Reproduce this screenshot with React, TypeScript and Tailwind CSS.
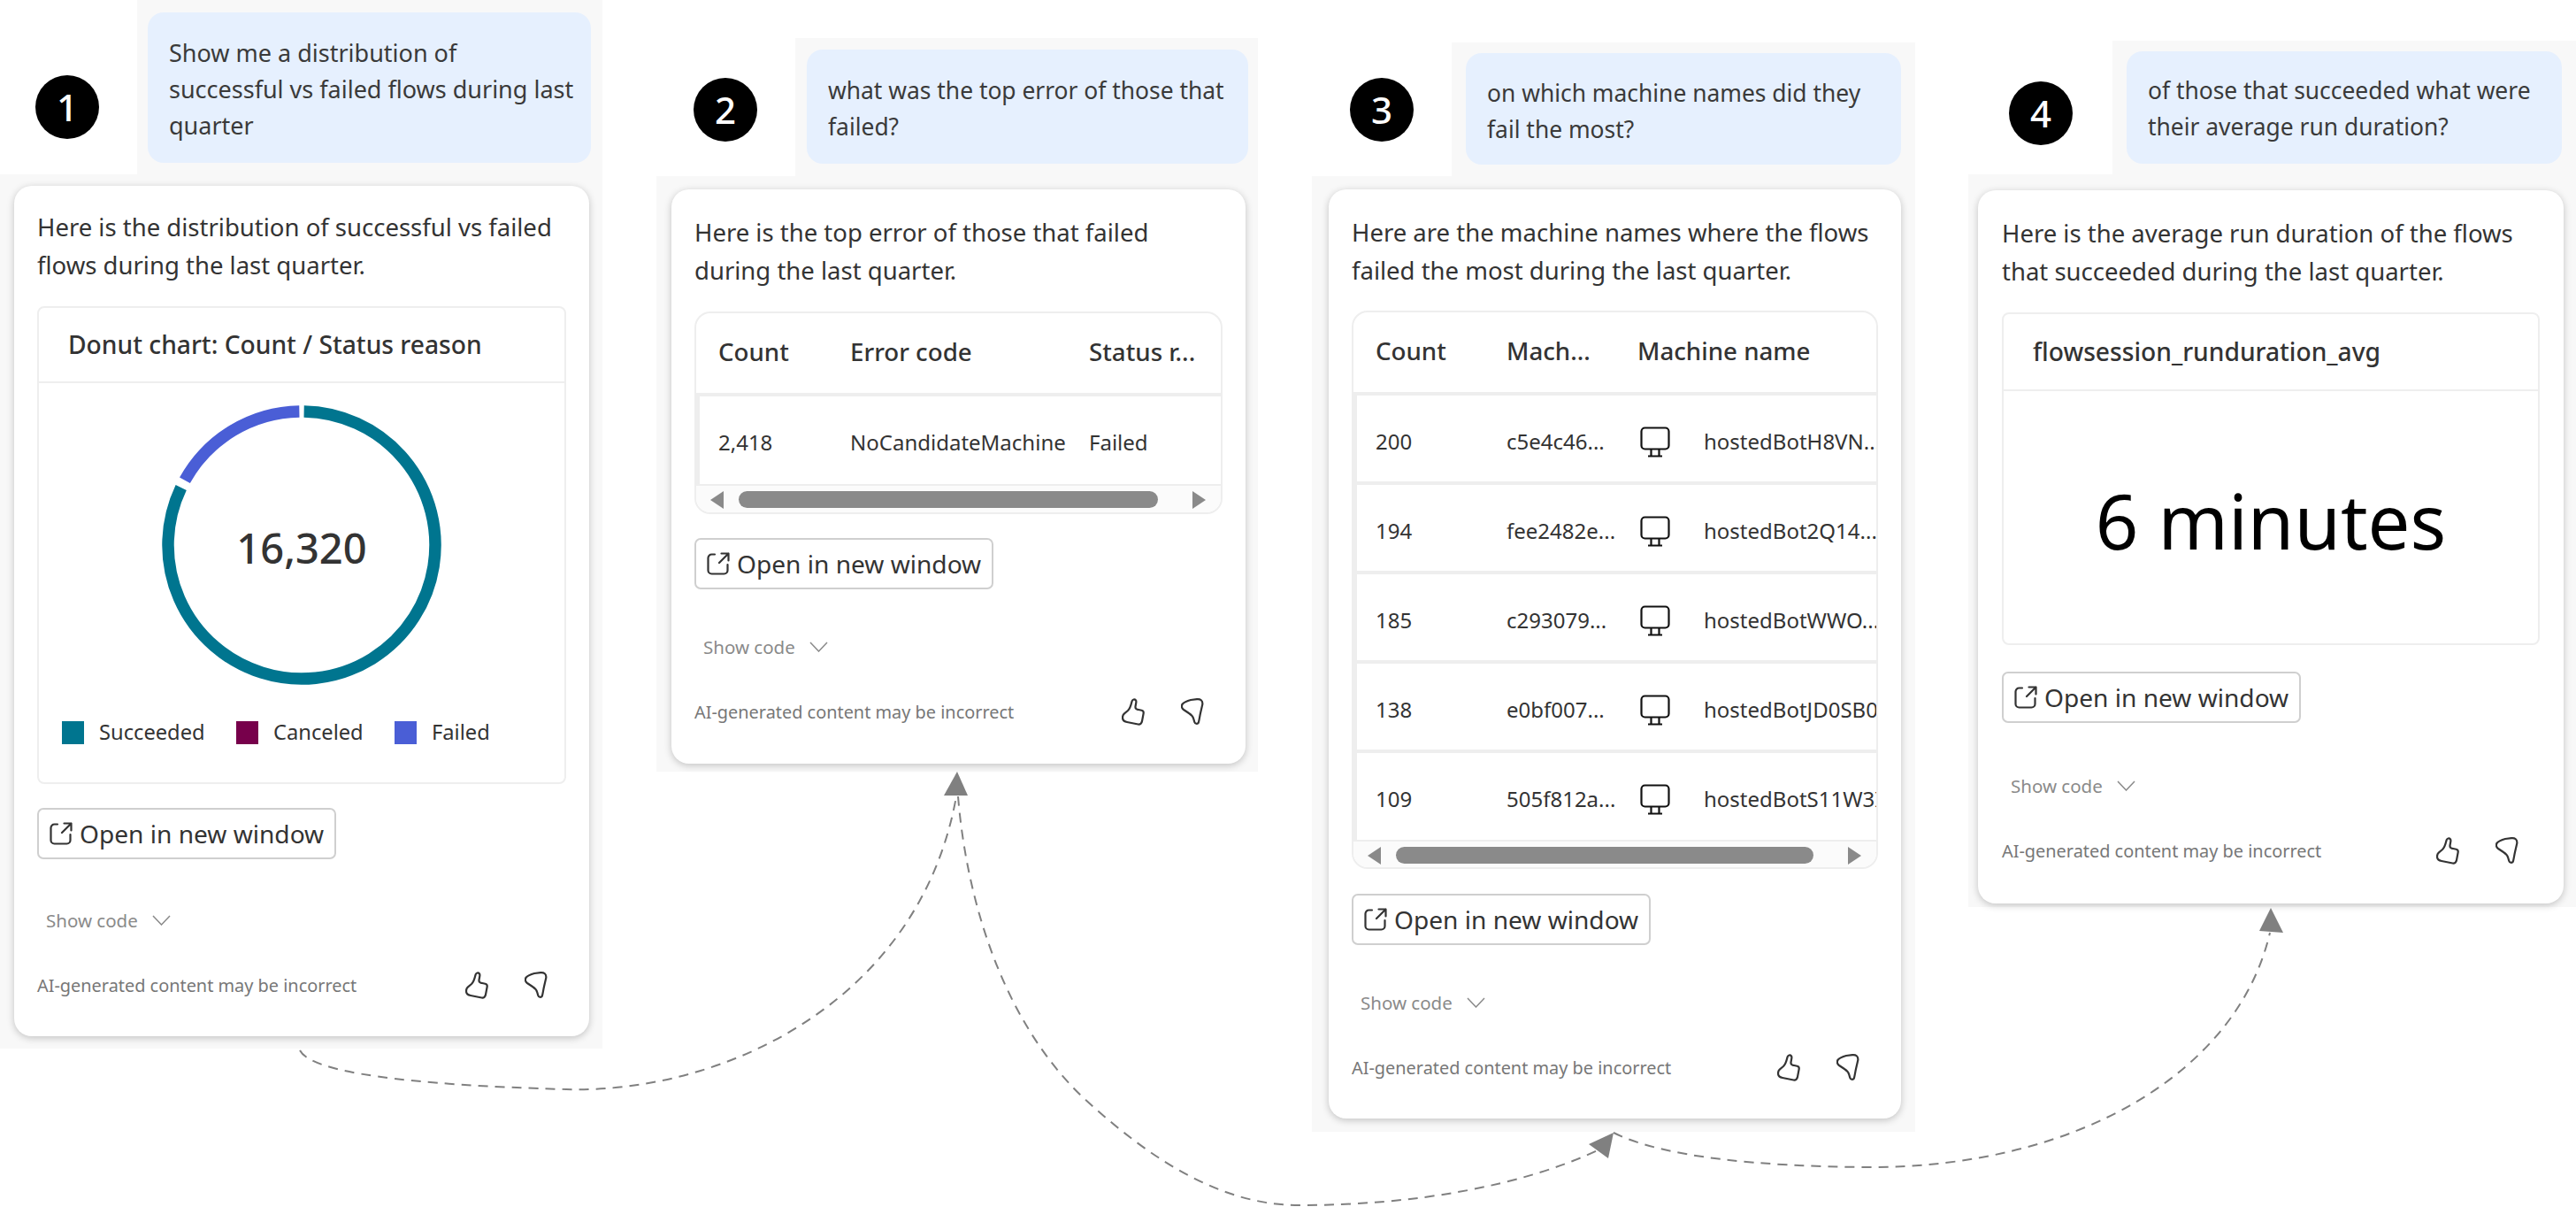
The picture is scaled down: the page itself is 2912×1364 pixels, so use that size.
import type { ReactNode } from "react";

const font = "font-['Noto_Sans','Open_Sans',sans-serif]";

function Badge({ n }: { n: number }) {
  return (
    <div className="flex h-[72px] w-[72px] items-center justify-center rounded-full bg-black text-[42px] font-medium leading-none text-white">
      {n}
    </div>
  );
}

function OpenIcon() {
  return (
    <svg width="26" height="26" viewBox="0 0 26 26" fill="none" stroke="#333" strokeWidth="2.200" strokeLinecap="round" strokeLinejoin="round">
      <path d="M9 2.500H5.500A4 4 0 0 0 1.500 6.500V20.500A4 4 0 0 0 5.500 24.500H19.500A4 4 0 0 0 23.500 20.500V14" />
      <path d="M16.500 1.500H24.500V9.500M24.500 1.500L14 12" />
    </svg>
  );
}

function ThumbUp() {
  return (
    <svg width="26" height="31" viewBox="0 0 26 31" fill="none" stroke="#333" strokeWidth="2.200" strokeLinejoin="round">
      <path d="M13.500 1.500C15.500 1.200 16.800 2.500 16.300 5L15.500 9.500C15.300 11.500 16 12.500 18 12.800L22.500 13.800C24.300 14.200 25 15.500 24.600 17.500L23 26C22.500 28.500 21 30 18.500 29.500L6 27C3.500 26.500 1 25 1 22C1 20 1.500 18.500 3 17.300L7 14C9 12 10.500 8 11.300 4.500C11.700 2.700 12.300 1.700 13.500 1.500Z" />
    </svg>
  );
}

function ThumbDown() {
  return (
    <svg width="26" height="31" viewBox="0 0 26 31" fill="none" stroke="#333" strokeWidth="2.200" strokeLinejoin="round">
      <path d="M1.800 6.500C4 4 8 2.800 11 2L18 1.200C22 .8 24.800 2.500 24.300 7L22 17C21.300 20 20.800 24 20 27C19.400 29.500 16 29.500 15.300 27L14.300 23.500C13.500 20.500 11.500 18.500 9 17L3 13C.6 11.300 .3 8.500 1.800 6.500Z" />
    </svg>
  );
}

function Monitor() {
  return (
    <svg width="34" height="35" viewBox="0 0 34 35" fill="none" stroke="#111" strokeWidth="2.200">
      <rect x="1.500" y="1.500" width="31" height="24" rx="4" />
      <path d="M12.500 26v7M21.500 26v7M9 33.500h16" />
    </svg>
  );
}

function Actions({ up, code }: { up: string; code: string }) {
  return (
    <>
      <div className="flex h-[58px] w-fit items-center gap-[8px] rounded-[7px] border-2 border-[#cfcfcf] pl-[12px] pr-[12px] text-[28.100px] text-[#333]">
        <OpenIcon />
        <span className="whitespace-nowrap">Open in new window</span>
      </div>
      <div className={`flex h-[28px] items-center pl-[10px] text-[20.500px] text-[#8a8a8a] ${code}`}>
        <span className="w-[120px] whitespace-nowrap">Show code</span>
        <svg width="21" height="12" viewBox="0 0 21 12" fill="none" stroke="#8a8a8a" strokeWidth="1.500">
          <path d="M1 1l9.500 10L20 1" />
        </svg>
      </div>
      <div className="mt-[44px] flex items-center">
        <span className="w-[361px] whitespace-nowrap text-[19.900px] text-[#777]">AI-generated content may be incorrect</span>
        <span className={up}>
          <ThumbUp />
        </span>
        <span className="ml-[41px]">
          <ThumbDown />
        </span>
      </div>
    </>
  );
}

function Bubble({ children, className }: { children: ReactNode; className: string }) {
  return <div className={`rounded-[18px] bg-[#e6f0fe] pl-[24px] leading-[41px] text-[#3a3a3a] ${className}`}>{children}</div>;
}

function Intro({ children }: { children: ReactNode }) {
  return <p className="whitespace-nowrap text-[27.500px] leading-[43px] text-[#333]">{children}</p>;
}

function Card({ children, className }: { children: ReactNode; className: string }) {
  return (
    <div className={`rounded-[20px] bg-white shadow-[0_2px_8px_rgba(0,0,0,0.22)] ${className}`}>{children}</div>
  );
}

function Legend({ color, label, className }: { color: string; label: string; className: string }) {
  return (
    <div className={`flex items-center ${className}`}>
      <span className={`h-[26px] w-[25px] ${color}`} />
      <span className="ml-[17px] text-[23.700px] text-[#333]">{label}</span>
    </div>
  );
}

function Donut() {
  // arc helper in degrees clockwise from the top
  const arc = (from: number, to: number) => {
    const r = 151;
    const pt = (a: number) => {
      const t = (a * Math.PI) / 180;
      return `${158 + r * Math.sin(t)} ${158 - r * Math.cos(t)}`;
    };
    return `M${pt(from)}A${r} ${r} 0 ${to - from > 180 ? 1 : 0} 1 ${pt(to)}`;
  };
  return (
    <div className="relative h-[316px] w-[316px]">
      <svg width="316" height="316" viewBox="0 0 316 316" fill="none" strokeWidth="13.500">
        <path d={arc(1, 295.500)} stroke="#00758f" />
        <path d={arc(299, 359)} stroke="#4a5ed6" />
      </svg>
      <div className="absolute inset-0 flex items-center justify-center pt-[6px] text-[47px] font-medium text-[#333]">16,320</div>
    </div>
  );
}

function ScrollBar({ thumb }: { thumb: string }) {
  return (
    <div className="flex h-[33px] items-center border-t-2 border-[#eeeeee] bg-[#fbfbfb] pl-[16px]">
      <span className="h-0 w-0 border-y-[10px] border-r-[15px] border-y-transparent border-r-[#8a8a8a]" />
      <span className={`h-[19px] rounded-full bg-[#8a8a8a] ${thumb}`} />
      <span className="h-0 w-0 border-y-[10px] border-l-[15px] border-y-transparent border-l-[#8a8a8a]" />
    </div>
  );
}

function ErrorTable() {
  return (
    <div className="h-[229px] overflow-hidden rounded-[18px] border-2 border-[#eeeeee]">
      <div className="flex h-[94px] items-center border-b-4 border-[#eeeeee] pb-[2px] pl-[25px] text-[27.700px] font-medium text-[#333]">
        <span className="w-[149px] shrink-0">Count</span>
        <span className="w-[270px] shrink-0">Error code</span>
        <span>Status r...</span>
      </div>
      <div className="flex h-[99px] items-center border-l-4 border-[#eeeeee] pl-[21px] pt-[5px] text-[24px] text-[#333]">
        <span className="w-[149px] shrink-0">2,418</span>
        <span className="w-[270px] shrink-0 whitespace-nowrap">NoCandidateMachine</span>
        <span>Failed</span>
      </div>
      <ScrollBar thumb="ml-[17px] mr-[39px] w-[474px]" />
    </div>
  );
}

const machines = [
  { count: "200", id: "c5e4c46...", name: "hostedBotH8VN..." },
  { count: "194", id: "fee2482e...", name: "hostedBot2Q14..." },
  { count: "185", id: "c293079...", name: "hostedBotWWO..." },
  { count: "138", id: "e0bf007...", name: "hostedBotJD0SB0" },
  { count: "109", id: "505f812a...", name: "hostedBotS11W3I" },
];

function MachineTable() {
  return (
    <div className="h-[631px] overflow-hidden rounded-[18px] border-2 border-[#eeeeee]">
      <div className="flex h-[94px] items-center border-b-4 border-[#eeeeee] pb-[2px] pl-[25px] text-[27.700px] font-medium text-[#333]">
        <span className="w-[148px] shrink-0">Count</span>
        <span className="w-[148px] shrink-0">Mach...</span>
        <span>Machine name</span>
      </div>
      {machines.map((m, i) => (
        <div
          key={m.count}
          className={`flex items-center overflow-hidden border-l-4 border-[#eeeeee] pl-[21px] text-[24px] text-[#333] ${i < 4 ? "h-[101px] border-b-4 pt-[7px]" : "h-[98px] pt-[6px]"}`}
        >
          <span className="w-[148px] shrink-0">{m.count}</span>
          <span className="w-[151px] shrink-0 whitespace-nowrap">{m.id}</span>
          <span className="w-[72px] shrink-0">
            <Monitor />
          </span>
          <span className="whitespace-nowrap">{m.name}</span>
        </div>
      ))}
      <ScrollBar thumb="ml-[17px] mr-[39px] w-[472px]" />
    </div>
  );
}

function TitledBox({ title, className, head, children }: { title: string; className: string; head: string; children: ReactNode }) {
  return (
    <div className={`rounded-[8px] border-2 border-[#eeeeee] ${className}`}>
      <div className={`flex items-center border-b-2 border-[#eeeeee] pl-[33px] text-[28.200px] font-medium text-[#333] ${head}`}>{title}</div>
      {children}
    </div>
  );
}

function Arrows() {
  return (
    <svg className="absolute left-0 top-0" width="2912" height="1364" viewBox="0 0 2912 1364" fill="none">
      <g stroke="#808080" strokeWidth="2" strokeDasharray="11 8">
        <path d="M339 1187C352 1212 460 1226 640 1231C820 1236 1040 1130 1081 900" />
        <path d="M1083 900C1092 1010 1130 1150 1224 1240C1300 1310 1380 1362 1468 1362C1600 1362 1720 1340 1806 1300" />
        <path d="M1824 1280C1880 1308 1990 1318 2110 1319C2350 1320 2530 1210 2566 1054" />
      </g>
      <g fill="#808080">
        <polygon points="1082,872 1067,899 1094,899" />
        <polygon points="1824,1280 1796,1293 1818,1309" />
        <polygon points="2567,1026 2554,1052 2581,1054" />
      </g>
    </svg>
  );
}

export default function App() {
  return (
    <div className={`relative h-[1364px] w-[2912px] overflow-hidden bg-white ${font}`}>
      <div className="flex items-start">
        {/* 1 */}
        <section className="w-[681px] shrink-0">
          <div className="flex h-[197px]">
            <div className="w-[155px] pl-[40px] pt-[85px]">
              <Badge n={1} />
            </div>
            <div className="flex-1 bg-[#f8f8f8] pl-[12px] pr-[13px] pt-[14px]">
              <Bubble className="h-[170px] pt-[25px] text-[27px]">
                Show me a distribution of
                <br />
                successful vs failed flows during last
                <br />
                quarter
              </Bubble>
            </div>
          </div>
          <div className="h-[988px] bg-[#f8f8f8] pl-[16px] pr-[15px] pt-[13px]">
            <Card className="h-[961px] px-[26px] pt-[25px]">
              <Intro>
                Here is the distribution of successful vs failed
                <br />
                flows during the last quarter.
              </Intro>
              <TitledBox title="Donut chart: Count / Status reason" className="mt-[25px] h-[540px]" head="h-[85px]">
                <div className="flex justify-center pt-[25px]">
                  <Donut />
                </div>
                <div className="mt-[36px] flex pl-[26px]">
                  <Legend color="bg-[#00758f]" label="Succeeded" className="w-[197px]" />
                  <Legend color="bg-[#77004b]" label="Canceled" className="w-[179px]" />
                  <Legend color="bg-[#4a5ed6]" label="Failed" className="" />
                </div>
              </TitledBox>
              <div className="mt-[27px]">
                <Actions up="ml-[123px]" code="mt-[55px]" />
              </div>
            </Card>
          </div>
        </section>

        {/* 2 */}
        <section className="ml-[61px] mt-[43px] w-[680px] shrink-0">
          <div className="flex h-[156px]">
            <div className="w-[157px] pl-[42px] pt-[45px]">
              <Badge n={2} />
            </div>
            <div className="flex-1 bg-[#f8f8f8] pl-[13px] pr-[11px] pt-[13px]">
              <Bubble className="h-[129px] pt-[26px] text-[26.400px]">
                what was the top error of those that
                <br />
                failed?
              </Bubble>
            </div>
          </div>
          <div className="h-[673px] bg-[#f8f8f8] pl-[17px] pr-[14px] pt-[15px]">
            <Card className="h-[649px] px-[26px] pt-[27px]">
              <Intro>
                Here is the top error of those that failed
                <br />
                during the last quarter.
              </Intro>
              <div className="mt-[25px]">
                <ErrorTable />
              </div>
              <div className="mt-[27px]">
                <Actions up="ml-[122px]" code="mt-[51px]" />
              </div>
            </Card>
          </div>
        </section>

        {/* 3 */}
        <section className="ml-[61px] mt-[48px] w-[682px] shrink-0">
          <div className="flex h-[151px]">
            <div className="w-[158px] pl-[43px] pt-[40px]">
              <Badge n={3} />
            </div>
            <div className="flex-1 bg-[#f8f8f8] pl-[16px] pr-[16px] pt-[12px]">
              <Bubble className="h-[126px] pt-[25px] text-[26.400px]">
                on which machine names did they
                <br />
                fail the most?
              </Bubble>
            </div>
          </div>
          <div className="h-[1080px] bg-[#f8f8f8] pl-[19px] pr-[16px] pt-[15px]">
            <Card className="h-[1050px] px-[26px] pt-[27px]">
              <Intro>
                Here are the machine names where the flows
                <br />
                failed the most during the last quarter.
              </Intro>
              <div className="mt-[24px]">
                <MachineTable />
              </div>
              <div className="mt-[28px]">
                <Actions up="ml-[120px]" code="mt-[51px]" />
              </div>
            </Card>
          </div>
        </section>

        {/* 4 */}
        <section className="ml-[60px] mt-[46px] w-[687px] shrink-0">
          <div className="flex h-[151px]">
            <div className="w-[163px] pl-[46px] pt-[46px]">
              <Badge n={4} />
            </div>
            <div className="flex-1 bg-[#f8f8f8] pl-[16px] pr-[16px] pt-[12px]">
              <Bubble className="h-[127px] pt-[24px] text-[26.400px]">
                of those that succeeded what were
                <br />
                their average run duration?
              </Bubble>
            </div>
          </div>
          <div className="h-[828px] bg-[#f8f8f8] pl-[11px] pr-[14px] pt-[18px]">
            <Card className="h-[806px] px-[27px] pt-[27px]">
              <Intro>
                Here is the average run duration of the flows
                <br />
                that succeeded during the last quarter.
              </Intro>
              <TitledBox title="flowsession_runduration_avg" className="mt-[25px] h-[376px]" head="h-[87px]">
                <div className="flex h-[285px] items-center justify-center pt-[8px] text-[85px] leading-none text-black">6 minutes</div>
              </TitledBox>
              <div className="mt-[30px]">
                <Actions up="ml-[130px]" code="mt-[57px]" />
              </div>
            </Card>
          </div>
        </section>
      </div>
      <Arrows />
    </div>
  );
}
